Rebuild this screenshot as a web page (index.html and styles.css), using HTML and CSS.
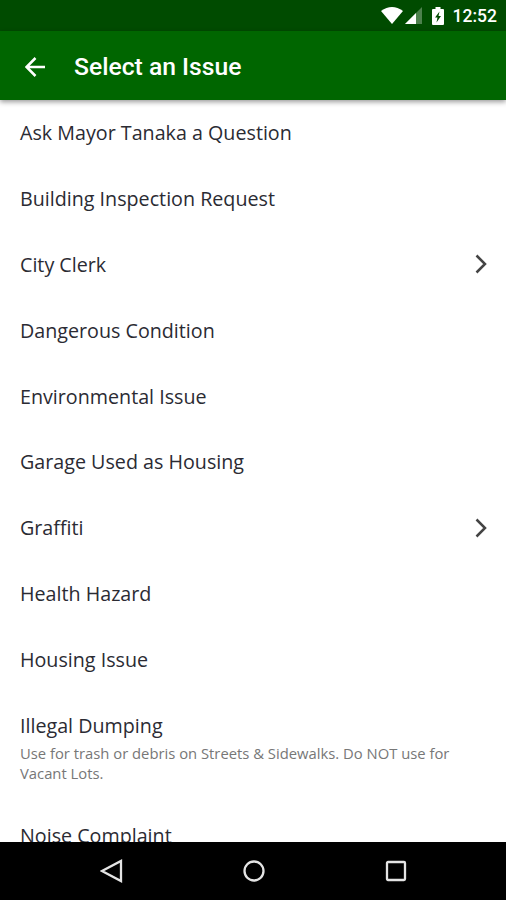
FILE: index.html
```html
<!DOCTYPE html>
<html lang="en">
<head>
  <meta charset="UTF-8" />
  <title>Select an Issue</title>
  <link rel="stylesheet" href="styles.css">
</head>
<body>

  <div class="status-bar">
    <svg class="wifi" viewBox="0 0 22 17"><path d="M0 4Q11-4 22 4L11 17Z"/></svg>
    <svg class="signal" viewBox="0 0 17 17"><path class="dim" d="M17 0V17H0Z"/><path d="M11 6V17H0Z"/></svg>
    <svg class="battery" viewBox="0 0 12 18"><path fill-rule="evenodd" d="M3.500 0h5v2H11q1 0 1 1V17q0 1-1 1H1q-1 0-1-1V3q0-1 1-1h2.500zM7.500 4.500L3 10.500H5.500L4.500 15.500L9 9H6.500z"/></svg>
    <span class="clock">12:52</span>
  </div>

  <header class="app-bar">
    <svg class="back" viewBox="0 0 20 20"><path d="M20 10H2M10.500 1L1.500 10L10.500 19"/></svg>
    <h1>Select an Issue</h1>
  </header>

  <main class="issues">
    <div class="issue">Ask Mayor Tanaka a Question</div>
    <div class="issue">Building Inspection Request</div>
    <div class="issue">City Clerk <svg class="chevron" viewBox="0 0 12 20"><path d="M1.500 1.500L10 10L1.500 18.500"/></svg></div>
    <div class="issue">Dangerous Condition</div>
    <div class="issue">Environmental Issue</div>
    <div class="issue">Garage Used as Housing</div>
    <div class="issue">Graffiti <svg class="chevron" viewBox="0 0 12 20"><path d="M1.500 1.500L10 10L1.500 18.500"/></svg></div>
    <div class="issue">Health Hazard</div>
    <div class="issue">Housing Issue</div>
    <div class="issue">Illegal Dumping</div>
    <p class="note">Use for trash or debris on Streets &amp; Sidewalks. Do NOT use for Vacant Lots.</p>
    <div class="issue last">Noise Complaint</div>
  </main>

  <nav class="nav-bar">
    <svg viewBox="0 0 24 24"><path d="M21 2V22L2 12Z"/></svg>
    <svg viewBox="0 0 24 24"><circle cx="12" cy="12" r="9.500"/></svg>
    <svg viewBox="0 0 24 24"><rect x="3" y="3" width="18" height="18" rx="1"/></svg>
  </nav>

</body>
</html>
```
FILE: styles.css
```css
* { box-sizing:border-box; }
body {
  margin:0;
  height:900px;
  display:flex;
  flex-direction:column;
  overflow:hidden;
  font-family:"Open Sans", sans-serif;
  background:#fff;
}
.status-bar {
  height:31px;
  flex:none;
  display:flex;
  align-items:center;
  justify-content:flex-end;
  padding-right:9px;
  background:#004b00;
  color:#fff;
}
.status-bar svg { fill:#fff; }
.wifi { width:22px; height:17px; }
.signal { width:17px; height:17px; margin-left:2px; }
.signal .dim { opacity:.3; }
.battery { width:12px; height:18px; margin-left:10px; }
.clock {
  margin:1px 0 0 9px;
  font:500 17.500px Roboto, sans-serif;
}
.app-bar {
  height:69px;
  flex:none;
  display:flex;
  align-items:center;
  padding:2px 0 0 25px;
  background:#006600;
  color:#fff;
  box-shadow:0 2px 5px rgba(0,0,0,.4);
  z-index:1;
}
.back {
  width:20px;
  height:20px;
  fill:none;
  stroke:#fff;
  stroke-width:2.5;
}
h1 {
  margin:0 0 0 29px;
  font:500 24.700px Roboto, sans-serif;
}
.issues {
  flex:1;
  min-height:0;
  overflow:hidden;
  padding:0 19px 0 20px;
}
.issue {
  height:65.800px;
  display:flex;
  align-items:center;
  justify-content:space-between;
  font-size:19.700px;
  color:#2b2b33;
}
.chevron {
  width:12px;
  height:20px;
  fill:none;
  stroke:#444;
  stroke-width:2.5;
}
.note {
  margin:-15px 0 0;
  font-size:14.800px;
  line-height:20px;
  color:#777;
}
.last { margin-top:20px; }
.nav-bar {
  height:58px;
  flex:none;
  display:flex;
  align-items:center;
  justify-content:center;
  gap:118px;
  padding-left:1px;
  background:#000;
}
.nav-bar svg {
  width:24px;
  height:24px;
  fill:none;
  stroke:#e4e4e4;
  stroke-width:2.3;
}
```
